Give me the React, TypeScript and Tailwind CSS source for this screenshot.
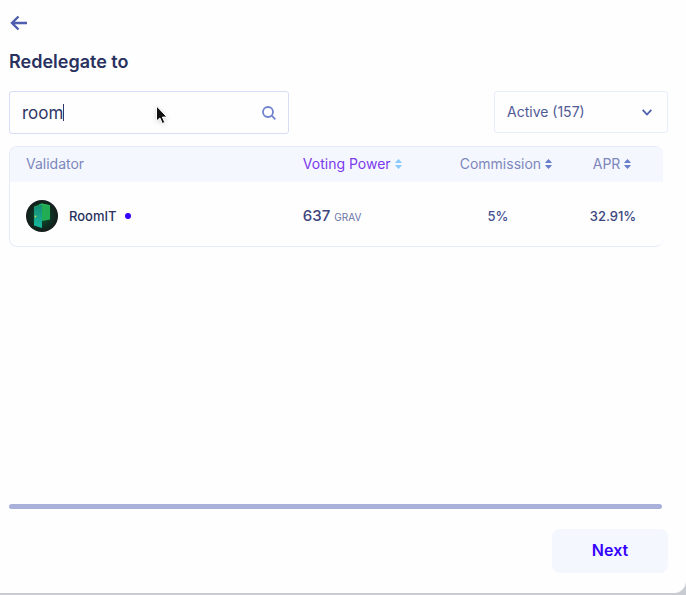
import React from "react";

function SortIcon({ className }: { className: string }) {
  return (
    <svg viewBox="0 0 7 10" className={`h-[10px] w-[7px] shrink-0 ${className}`} fill="currentColor" aria-hidden="true">
      <path d="M3.500 0 6.800 3.600 6.400 4H.6L.2 3.600zM3.500 10 6.800 6.400 6.400 6H.6L.2 6.400z" />
    </svg>
  );
}

function RoomLogo() {
  return (
    <svg viewBox="0 0 32 32" className="size-8 shrink-0" aria-hidden="true">
      <defs>
        <radialGradient id="room-bg">
          <stop offset="0" stopColor="#0c5a34" />
          <stop offset="0.65" stopColor="#0d3021" />
          <stop offset="1" stopColor="#151b1b" />
        </radialGradient>
        <linearGradient id="room-door" x1="0" y1="0" x2="0" y2="1">
          <stop offset="0" stopColor="#178a72" />
          <stop offset="1" stopColor="#16b9a0" />
        </linearGradient>
      </defs>
      <circle cx="16" cy="16" r="16" fill="url(#room-bg)" />
      <path d="M13 4.500 16 3.500 24 5.500V19.500l-8 1.500z" fill="#22ad55" />
      <path d="M8 7 16 4.500V28l-8-2.500z" fill="url(#room-door)" />
      <path d="M8 7 16 4l8 1.500" fill="none" stroke="#2cc46a" strokeWidth="0.6" />
      <circle cx="9.500" cy="16.500" r="0.9" fill="#c4d54a" />
    </svg>
  );
}

function SortButton({ label, className, iconClass }: { label: string; className: string; iconClass: string }) {
  return (
    <button type="button" className={`inline-flex items-center gap-1 ${className}`}>
      {label}
      <SortIcon className={iconClass} />
    </button>
  );
}

export default function App() {
  return (
    <div className="flex min-h-screen flex-col bg-[#c8ccd2] pb-[2px] font-['Inter','Liberation_Sans',sans-serif] text-sm text-[#46508f]">
      <main className="flex flex-1 flex-col rounded-br-xl bg-[#fefefe] pr-[18px] pb-5 pl-[9px]">
        <button type="button" aria-label="Back" className="mt-[13px] flex h-5 w-5 items-center justify-center">
          <svg viewBox="0 0 20 20" className="size-5" fill="none" stroke="#505eaf" strokeWidth="2.400" aria-hidden="true">
            <path d="M18 10H3.500M9.500 3.500 3 10l6.500 6.500" />
          </svg>
        </button>

        <h1 className="mt-[17px] text-lg leading-6 font-semibold text-[#29315f]">Redelegate to</h1>

        <div className="mt-[17px] flex items-start justify-between">
          <div className="relative flex h-[43px] w-[280px] items-center rounded-[3px] border border-[#d6def5] px-3">
            <input
              type="text"
              aria-label="Search validator"
              defaultValue="room"
              className="h-6 min-w-0 flex-1 bg-transparent text-[17px] leading-6 text-[#303766] outline-none"
            />
            <svg viewBox="0 0 14 14" className="size-[14px]" fill="none" stroke="#7284ce" strokeWidth="1.800" aria-hidden="true">
              <circle cx="6" cy="6" r="5" />
              <path d="m9.700 9.700 3.600 3.600" />
            </svg>
            <span className="absolute top-3 left-[53px] h-[17px] w-px bg-[#303766]" />
            <svg viewBox="0 0 14 20" className="absolute top-[13px] left-[145px] h-5 w-[14px] drop-shadow-sm" aria-hidden="true">
              <path d="M1.500 1v15l3.400-3 2.400 5.500 2.500-1.100-2.400-5.300H12z" fill="#111" stroke="#fff" />
            </svg>
          </div>

          <div className="relative w-[174px]">
            <select
              aria-label="Validator status"
              className="h-[42px] w-full appearance-none rounded-[3px] border border-[#e8edfb] bg-transparent pr-8 pl-3 text-sm text-[#505a96] outline-none"
            >
              <option>Active (157)</option>
            </select>
            <svg viewBox="0 0 10 7" className="pointer-events-none absolute top-[18px] right-4 h-[7px] w-[10px]" fill="none" stroke="#505eaf" strokeWidth="1.800" aria-hidden="true">
              <path d="m.7.8 4.300 4.700L9.300.8" />
            </svg>
          </div>
        </div>

        <div className="mt-3 mr-[5px] overflow-hidden rounded-lg border border-r-0 border-[#e6ebfa]">
          <table className="w-full table-fixed border-collapse">
            <colgroup>
              <col className="w-[42.4%]" />
              <col className="w-[25.1%]" />
              <col className="w-[17.2%]" />
              <col className="w-[15.3%]" />
            </colgroup>
            <thead className="bg-[#f4f7fe] text-[#7d87bd]">
              <tr className="h-[35px]">
                <th scope="col" className="pb-[2px] pl-4 text-left font-normal">Validator</th>
                <th scope="col" className="pb-[2px] pl-4 text-left font-normal">
                  <SortButton label="Voting Power" className="text-[#7c3aed]" iconClass="text-[#8bcbfb]" />
                </th>
                <th scope="col" className="pr-[2px] pb-[2px] text-center font-normal whitespace-nowrap">
                  <SortButton label="Commission" className="" iconClass="text-[#6b7fcb]" />
                </th>
                <th scope="col" className="pr-[2px] pb-[2px] text-center font-normal">
                  <SortButton label="APR" className="" iconClass="text-[#6b7fcb]" />
                </th>
              </tr>
            </thead>
            <tbody>
              <tr className="h-16">
                <td className="pt-1 pl-4">
                  <div className="flex items-center">
                    <RoomLogo />
                    <span className="ml-[11px] text-[13px] font-medium text-[#29315f]">RoomIT</span>
                    <span className="ml-2 size-[6px] rounded-full bg-[#3300ff]" />
                  </div>
                </td>
                <td className="pt-1 pl-4">
                  <span className="text-[15px] font-medium text-[#3d467d]">637</span>
                  <span className="ml-1 text-[10px] text-[#6b74a5]">GRAV</span>
                </td>
                <td className="pt-1 pr-[18px] text-center text-[13px] font-medium">5%</td>
                <td className="pt-1 text-center text-[13px] font-medium text-[#3d467d]">32.91%</td>
              </tr>
            </tbody>
          </table>
        </div>

        <div className="mt-auto mr-[6px] h-[5px] rounded-full bg-[#a9b1da]" />

        <button
          type="button"
          className="mt-5 flex h-11 w-[116px] items-center justify-center self-end rounded-lg bg-[#f4f7fe] pb-[2px] text-base font-semibold text-[#3300ff]"
        >
          Next
        </button>
      </main>
    </div>
  );
}
